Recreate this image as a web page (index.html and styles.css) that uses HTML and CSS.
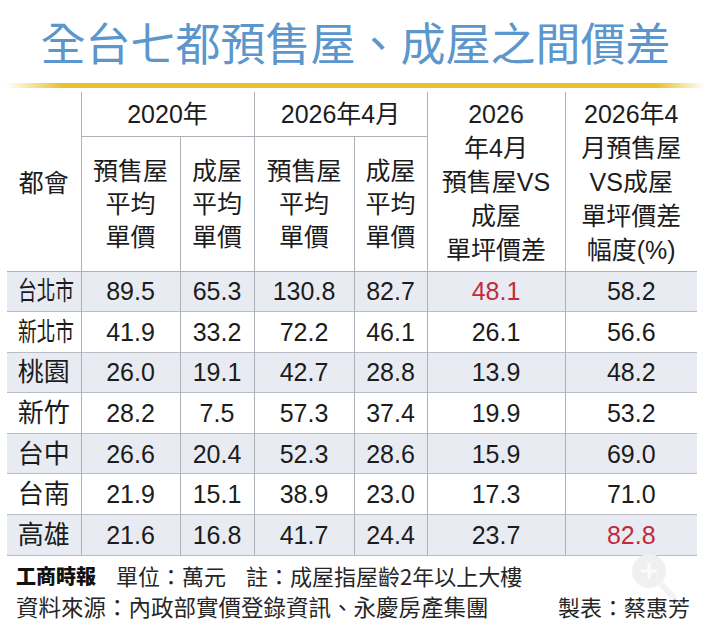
FILE: index.html
```html
<!DOCTYPE html>
<html lang="zh-Hant">
<head>
<meta charset="utf-8">
<title>全台七都預售屋、成屋之間價差</title>
<link rel="stylesheet" href="styles.css">
</head>
<body>
<div class="page">
  <h1 class="title">全台七都預售屋、成屋之間價差</h1>
  <div class="rule"></div>
  <table class="grid">
    <colgroup>
      <col class="w-city"><col class="w-a"><col class="w-b"><col class="w-c"><col class="w-d"><col class="w-e"><col class="w-f">
    </colgroup>
    <thead>
      <tr class="hrow1">
        <th rowspan="2" class="first">都會</th>
        <th colspan="2" class="year">2020年</th>
        <th colspan="2" class="year">2026年4月</th>
        <th rowspan="2" class="tall">2026<br>年4月<br>預售屋VS<br>成屋<br>單坪價差</th>
        <th rowspan="2" class="tall">2026年4<br>月預售屋<br>VS成屋<br>單坪價差<br>幅度(%)</th>
      </tr>
      <tr class="hrow2">
        <th>預售屋<br>平均<br>單價</th>
        <th>成屋<br>平均<br>單價</th>
        <th>預售屋<br>平均<br>單價</th>
        <th>成屋<br>平均<br>單價</th>
      </tr>
    </thead>
    <tbody>
      <tr class="shade"><td class="first"><span class="narrow">台北市</span></td><td>89.5</td><td>65.3</td><td>130.8</td><td>82.7</td><td class="red">48.1</td><td>58.2</td></tr>
      <tr><td class="first"><span class="narrow">新北市</span></td><td>41.9</td><td>33.2</td><td>72.2</td><td>46.1</td><td>26.1</td><td>56.6</td></tr>
      <tr class="shade"><td class="first">桃園</td><td>26.0</td><td>19.1</td><td>42.7</td><td>28.8</td><td>13.9</td><td>48.2</td></tr>
      <tr><td class="first">新竹</td><td>28.2</td><td>7.5</td><td>57.3</td><td>37.4</td><td>19.9</td><td>53.2</td></tr>
      <tr class="shade"><td class="first">台中</td><td>26.6</td><td>20.4</td><td>52.3</td><td>28.6</td><td>15.9</td><td>69.0</td></tr>
      <tr><td class="first">台南</td><td>21.9</td><td>15.1</td><td>38.9</td><td>23.0</td><td>17.3</td><td>71.0</td></tr>
      <tr class="shade"><td class="first">高雄</td><td>21.6</td><td>16.8</td><td>41.7</td><td>24.4</td><td>23.7</td><td class="red">82.8</td></tr>
    </tbody>
  </table>
  <div class="notes">
    <div class="note-line">
      <span class="logo">工商時報</span>
      <span>單位：萬元</span>
      <span>註：成屋指屋齡2年以上大樓</span>
    </div>
    <div class="note-line split">
      <span class="source">資料來源：內政部實價登錄資訊、永慶房產集團</span>
      <span>製表：蔡惠芳</span>
    </div>
  </div>
  <svg class="zoomhint" width="50" height="56" viewBox="0 0 50 56" aria-hidden="true">
    <circle cx="18" cy="18" r="17" fill="#f0f0f0"/>
    <path d="M18 10v16M10 18h16" stroke="#fbfbfb" stroke-width="3"/>
    <path d="M30 31l12 13" stroke="#f3f3f3" stroke-width="6" stroke-linecap="round"/>
  </svg>
</div>
</body>
</html>
```
FILE: styles.css
```css
html, body {
  margin: 0;
  padding: 0;
  background: #ffffff;
}

.page {
  position: relative;
  width: 711px;
  height: 631px;
  overflow: hidden;
  font-family: "Liberation Sans", "Noto Sans CJK TC", sans-serif;
  color: #1c1c1c;
}

.title {
  margin: 0;
  height: 82px;
  line-height: 84px;
  text-align: center;
  font-family: "Noto Sans CJK TC", sans-serif;
  font-size: 45px;
  font-weight: 400;
  color: #5b96cd;
}

.rule {
  margin: 1px 6px 0 6px;
  height: 5px;
  background: linear-gradient(to right, rgba(232,196,40,0) 0%, #e6c22c 8%, #e6c22c 93%, rgba(232,196,40,0) 100%);
}

.grid {
  margin: 4px 0 0 7px;
  border-collapse: collapse;
  table-layout: fixed;
  width: 690px;
}

.w-city { width: 74px; }
.w-a { width: 99px; }
.w-b { width: 74px; }
.w-c { width: 100px; }
.w-d { width: 73px; }
.w-e { width: 138px; }
.w-f { width: 132px; }

.grid th,
.grid td {
  padding: 0;
  text-align: center;
  vertical-align: middle;
  border-left: 1px solid #aeb1b8;
  white-space: nowrap;
}

.grid th.first,
.grid td.first {
  border-left: none;
}

.grid th {
  font-weight: normal;
  font-size: 25px;
}

.hrow1 { height: 44px; }
.hrow1 .year {
  border-bottom: 1px solid #aeb1b8;
  line-height: 30px;
}

.hrow2 { height: 135px; }
.hrow2 th {
  line-height: 33px;
  padding-top: 1px;
}

.grid th.tall {
  line-height: 34px;
  padding-top: 2px;
}

.grid thead {
  border-bottom: 1px solid #aeb1b8;
}

.grid tbody tr {
  height: 40.6px;
  border-bottom: 1px solid #b9bcc4;
}

.grid tbody tr.shade {
  background: #e8ebf2;
}

.grid td {
  font-size: 25px;
  line-height: 28px;
}

.grid td.first {
  font-size: 26px;
}

.narrow {
  display: inline-block;
  transform: scaleX(0.72);
}

.red {
  color: #c42a3e;
}

.notes {
  padding: 4px 21px 0 16px;
  font-family: "Noto Sans CJK TC", sans-serif;
  font-size: 22px;
  color: #262626;
}

.note-line {
  display: flex;
  align-items: center;
  gap: 20px;
  height: 31px;
  line-height: 31px;
}

.note-line.split {
  justify-content: space-between;
}

.source {
  font-size: 22.5px;
}

.logo {
  font-size: 20px;
  font-weight: 900;
  color: #111111;
}

.zoomhint {
  position: absolute;
  left: 631px;
  top: 553px;
}
```
